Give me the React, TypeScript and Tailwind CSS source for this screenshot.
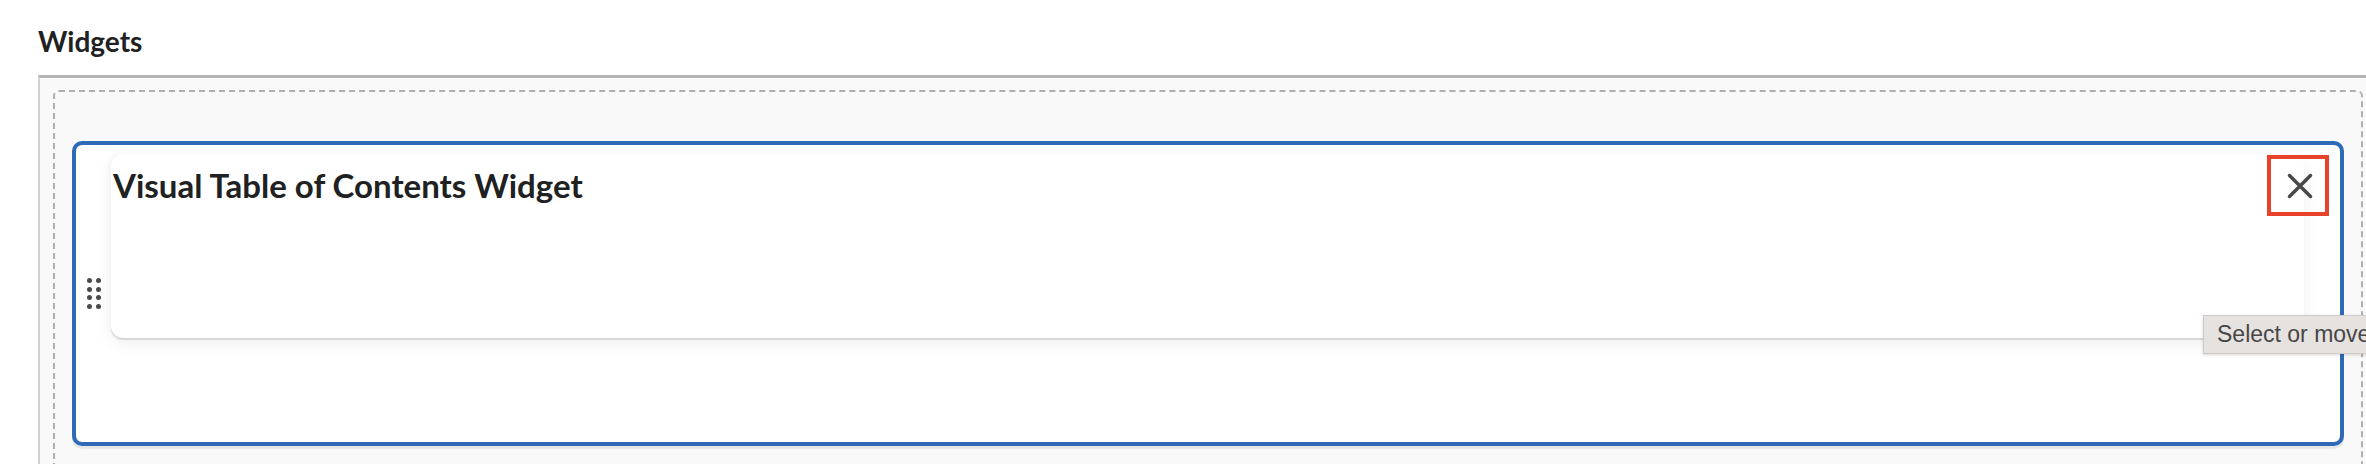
// Widgets layout editor: one widget slot with a placed widget card.

function DragHandle() {
  return (
    <div className="grid shrink-0 grid-cols-2 gap-x-[4px] gap-y-[3.5px]" aria-hidden="true">
      {Array.from({ length: 8 }).map((_, i) => (
        <span key={i} className="h-[5px] w-[5px] rounded-full bg-[#4a4a4a]" />
      ))}
    </div>
  );
}

function CloseIcon() {
  return (
    <svg width="26" height="26" viewBox="0 0 26 26" fill="none" aria-hidden="true">
      <path d="M2.5 2.5L23.5 23.5M23.5 2.5L2.5 23.5" stroke="#484848" strokeWidth="3.5" strokeLinecap="round" />
    </svg>
  );
}

export default function App() {
  return (
    <div className="relative flex h-[464px] w-full flex-col overflow-hidden bg-white font-['Lato','Noto_Sans',sans-serif] text-[#202122]">
      <h2 className="h-[75px] shrink-0 pl-[38px] pt-[24px] text-[28px] font-bold leading-[34px]">Widgets</h2>

      {/* Outer layout region */}
      <div className="ml-[38px] min-h-0 flex-1 overflow-hidden border-l-2 border-t-[3px] border-l-[#d2d2d2] border-t-[#b6b6b9] bg-[#f9f9f9] pl-[13px] pr-[3px] pt-[12px]">
        {/* Drop zone */}
        <div className="h-[420px] rounded-[6px] border-2 border-dashed border-[#afafaf] px-[17px] pt-[49px]">
          {/* Selected widget slot */}
          <div className="relative flex h-[305px] items-center rounded-[10px] border-4 border-[#2f6ab6] bg-white pl-[11px] pr-[36px] shadow-[0_3px_0_#e6e6e6]">
            <DragHandle />
            <div className="ml-[10px] mt-[9px] h-[184px] flex-1 self-start rounded-[12px] bg-white pl-[2px] pt-[11px] shadow-[0_2px_0_#d7d7d7,0_6px_18px_rgba(0,0,0,0.06),-2px_0_6px_rgba(0,0,0,0.03)]">
              <h3 className="text-[33px] font-bold leading-[40px]">Visual Table of Contents Widget</h3>
            </div>

            <button
              type="button"
              aria-label="Remove widget"
              className="absolute right-[11px] top-[10px] flex h-[61px] w-[62px] items-center justify-center border-4 border-[#e8432a] bg-transparent pl-[3px]"
            >
              <CloseIcon />
            </button>
          </div>
        </div>
      </div>

      {/* Native tooltip */}
      <div className="absolute left-[2203px] top-[315px] flex h-[39px] items-center whitespace-nowrap border border-[#cfcac8] bg-[#e6e2e0] pl-[13px] pr-3 font-['Liberation_Sans','Noto_Sans',sans-serif] text-[23px] text-[#474747] shadow-[0_1px_3px_rgba(0,0,0,0.15)]">
        Select or move this widget
      </div>
    </div>
  );
}
